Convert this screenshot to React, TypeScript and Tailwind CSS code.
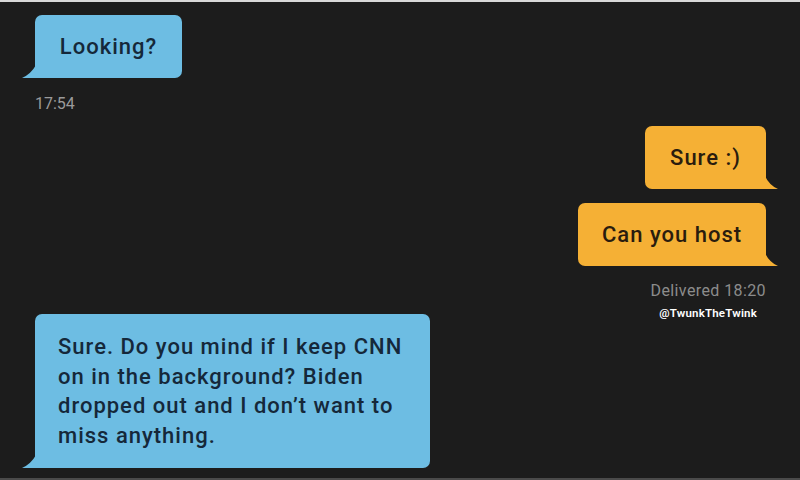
const font = { fontFamily: "Roboto, 'Noto Sans', sans-serif" };

function Tail({ side, color }: { side: "left" | "right"; color: string }) {
  if (side === "left") {
    return (
      <svg
        className="absolute bottom-0 left-[-13px]"
        width="14"
        height="13"
        viewBox="0 0 14 13"
      >
        <path d="M14 0 L14 13 L0 13 Q9 9 14 0 Z" fill={color} />
      </svg>
    );
  }
  return (
    <svg
      className="absolute bottom-0 right-[-12px]"
      width="13"
      height="13"
      viewBox="0 0 13 13"
    >
      <path d="M0 0 L0 13 L13 13 Q4 9 0 0 Z" fill={color} />
    </svg>
  );
}

function InBubble({ children, className }: { children: React.ReactNode; className?: string }) {
  return (
    <div
      className={`relative rounded-[7px] rounded-bl-none bg-[#6dbde3] text-[22px] font-medium tracking-[1px] text-[#15283a] ${className ?? ""}`}
    >
      {children}
      <Tail side="left" color="#6dbde3" />
    </div>
  );
}

function OutBubble({ children, className }: { children: React.ReactNode; className?: string }) {
  return (
    <div
      className={`relative self-end rounded-[7px] rounded-br-none bg-[#f5b035] text-[22px] font-medium tracking-[1px] text-[#2a1c0e] ${className ?? ""}`}
    >
      {children}
      <Tail side="right" color="#f5b035" />
    </div>
  );
}

export default function App() {
  return (
    <div
      className="relative flex h-[480px] w-[800px] flex-col overflow-hidden border-t-2 border-b-2 border-t-[#d8d8d8] border-b-[#4a4a4a] bg-[#1c1c1c] pl-[35px] pr-[34px]"
      style={font}
    >
      <InBubble className="mt-[13px] flex h-[63px] w-[147px] items-center justify-center">
        Looking?
      </InBubble>

      <div className="mt-[16px] text-[16px] leading-[20px] text-[#9a9a9a]">17:54</div>

      <OutBubble className="mt-[12px] flex h-[63px] w-[121px] items-center justify-center">
        Sure :)
      </OutBubble>

      <OutBubble className="mt-[14px] flex h-[63px] w-[188px] items-center justify-center">
        Can you host
      </OutBubble>

      <div className="mt-[15px] self-end text-[16px] leading-[20px] tracking-[0.4px] text-[#8c8c8c]">
        Delivered 18:20
      </div>

      <InBubble className="mt-[13px] h-[154px] w-[395px] px-[23px] py-[18px] leading-[29.5px]">
        Sure. Do you mind if I keep CNN
        <br />
        on in the background? Biden
        <br />
        dropped out and I don’t want to
        <br />
        miss anything.
      </InBubble>

      <div className="absolute right-[43px] top-[304px] text-[11.5px] font-semibold leading-[14px] tracking-[0.2px] text-white">
        @TwunkTheTwink
      </div>
    </div>
  );
}
